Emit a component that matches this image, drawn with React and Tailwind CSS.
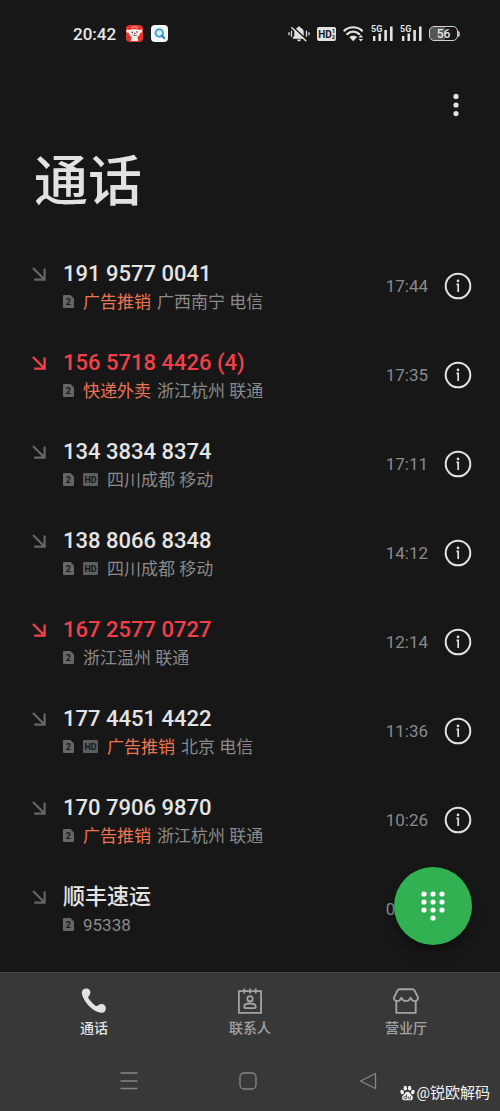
import React from "react";

const calls = [
  { name: "191 9577 0041", tag: "广告推销", place: "广西南宁 电信", time: "17:44" },
  { name: "156 5718 4426 (4)", tag: "快递外卖", place: "浙江杭州 联通", time: "17:35", missed: true },
  { name: "134 3834 8374", hd: true, place: "四川成都 移动", time: "17:11" },
  { name: "138 8066 8348", hd: true, place: "四川成都 移动", time: "14:12" },
  { name: "167 2577 0727", place: "浙江温州 联通", time: "12:14", missed: true },
  { name: "177 4451 4422", hd: true, tag: "广告推销", place: "北京 电信", time: "11:36" },
  { name: "170 7906 9870", tag: "广告推销", place: "浙江杭州 联通", time: "10:26" },
  { name: "顺丰速运", place: "95338", time: "09:58" },
];

function CourierAppIcon() {
  return (
    <svg width="17" height="17" viewBox="0 0 17 17" aria-hidden="true">
      <rect width="17" height="17" rx="4" fill="#e2352f" />
      <path d="M.3 6c0-1.500 1.600-2 2.600-1C5 4 12 4 13.400 5c1-1 3-.5 3 1 0 1.200-1 2-2.100 1.800C14 10 12.500 11.300 11.500 11.600L12 16H5l.6-4.400C4 11 3 9.600 2.800 7.800 1.300 8 .3 7.200.3 6z" fill="#f7f1ef" />
      <circle cx="6.300" cy="7.200" r=".8" fill="#333" />
      <circle cx="11" cy="7" r=".8" fill="#333" />
      <circle cx="8.700" cy="8.300" r=".9" fill="#d63a35" />
      <path d="M6.500 9.800c1.400 1 3 1 4.400 0" stroke="#444" strokeWidth=".8" fill="none" />
      <path d="M5 3c2-1.400 5.500-1.400 7.300 0" stroke="#f5b9ae" strokeWidth=".9" fill="none" />
    </svg>
  );
}

function SearchAppIcon() {
  return (
    <svg width="17" height="17" viewBox="0 0 17 17" aria-hidden="true">
      <rect width="17" height="17" rx="4" fill="#f1f8fc" />
      <circle cx="8.300" cy="8" r="3.700" stroke="#4a9fd0" strokeWidth="2" fill="#d8eef9" />
      <path d="M10.800 10.600l2.300 2.500" stroke="#3687b8" strokeWidth="2.200" strokeLinecap="round" />
    </svg>
  );
}

function MutedBellIcon() {
  return (
    <svg width="22" height="18" viewBox="0 0 22 18" fill="none" aria-hidden="true">
      <path d="M11 1.500c.8 0 1.200.5 1.200 1.100 2.200.6 3.500 2.300 3.500 4.600v3.500l1.600 2.300v.8H4.700V13l1.600-2.300V7.200c0-2.300 1.300-4 3.500-4.600 0-.6.400-1.100 1.200-1.100zM9 14.500h4c-.3 1.200-1 1.800-2 1.800s-1.700-.6-2-1.800z" fill="#e2e2e2" />
      <path d="M5 2l14 13" stroke="#171717" strokeWidth="1.600" />
      <path d="M3.800 2.800l14 13" stroke="#e2e2e2" strokeWidth="1.500" strokeLinecap="round" />
      <path d="M3.500 6.200v5M1 7.700v2M18.500 6.200v5M21 7.700v2" stroke="#e2e2e2" strokeWidth="1.300" strokeLinecap="round" />
    </svg>
  );
}

function HdVoiceIcon() {
  return (
    <svg width="19" height="14" viewBox="0 0 19 14" aria-hidden="true">
      <rect width="19" height="14" rx="2" fill="#e2e2e2" />
      <g fill="#171717" fontFamily="Roboto, sans-serif" fontWeight="700">
        <text x="1.300" y="10.600" fontSize="10">HD</text>
        <text x="14.800" y="6.300" fontSize="6">1</text>
        <text x="14.800" y="12.400" fontSize="6">2</text>
      </g>
    </svg>
  );
}

function WifiIcon() {
  return (
    <svg width="21" height="17" viewBox="0 0 21 17" fill="none" aria-hidden="true">
      <path d="M1.400 5.600c4.800-4.500 12.800-4.500 17.600 0M4.200 9.100c3.400-3.200 8.600-3.200 12 0" stroke="#e2e2e2" strokeWidth="2.200" strokeLinecap="round" />
      <path d="M6.300 12.100c2.200-1.900 5.600-1.900 7.800 0L10.200 16.200z" fill="#e2e2e2" />
      <path d="M17.800 9.800l2.300 2.600h-4.600zM17.800 16.500l2.300-2.600h-4.600z" fill="#e2e2e2" />
    </svg>
  );
}

function SignalIcon() {
  return (
    <svg width="22" height="17" viewBox="0 0 22 17" aria-hidden="true">
      <text x="0" y="7" fill="#e2e2e2" fontFamily="Roboto, sans-serif" fontWeight="700" fontSize="9">5G</text>
      <path d="M2 11h2.400v5H2zM7.500 8.500h2.500V16H7.500zM13.300 5h2.600V16h-2.600zM19 1.500h2.600V16H19z" fill="#e2e2e2" />
    </svg>
  );
}

function StatusBar() {
  return (
    <div className="flex h-[67px] items-center justify-between pl-[73px] pr-10">
      <div className="flex items-center gap-2">
        <span className="mr-0.5 text-[17px] leading-6 font-medium text-[#e8e8e8]">20:42</span>
        <CourierAppIcon />
        <SearchAppIcon />
      </div>
      <div className="flex items-center gap-[7px]">
        <MutedBellIcon />
        <HdVoiceIcon />
        <WifiIcon />
        <SignalIcon />
        <SignalIcon />
        <div className="flex items-center">
          <span className="flex h-[15px] w-[29px] items-center justify-center rounded-[5px] border border-[#d0d0d0] bg-gradient-to-r from-[#555] from-55% to-[#171717] to-55% text-xs leading-3 font-medium text-[#e8e8e8]">
            56
          </span>
          <span className="h-1.5 w-0.5 rounded-r-sm bg-[#b0b0b0]" />
        </div>
      </div>
    </div>
  );
}

function ArrowIcon({ missed }) {
  return (
    <svg width="14" height="14" viewBox="0 0 14 14" fill="none" stroke={missed ? "#f2404a" : "#666666"} strokeWidth={missed ? 2.400 : 2.200} aria-hidden="true">
      <path d="M1 1L12.500 12.500M12.600 1.500v11.100H2.200" />
    </svg>
  );
}

function SimIcon() {
  return (
    <svg width="11" height="13" viewBox="0 0 11 13" aria-hidden="true">
      <path d="M1 0h6.500L11 3.500V12a1 1 0 0 1-1 1H1a1 1 0 0 1-1-1V1a1 1 0 0 1 1-1z" fill="#666666" />
      <text x="5.300" y="10" textAnchor="middle" fill="#171717" fontFamily="Roboto, sans-serif" fontWeight="700" fontSize="9">2</text>
    </svg>
  );
}

function HdIcon() {
  return (
    <svg width="15" height="13" viewBox="0 0 15 13" aria-hidden="true">
      <rect width="15" height="13" rx="1" fill="#5e5e5e" />
      <text x="7.500" y="9.800" textAnchor="middle" fill="#171717" fontFamily="Roboto, sans-serif" fontWeight="700" fontSize="9">HD</text>
    </svg>
  );
}

function InfoIcon() {
  return (
    <svg width="28" height="28" viewBox="0 0 28 28" fill="none" aria-hidden="true">
      <circle cx="14" cy="14" r="12.300" stroke="#e2e2e2" strokeWidth="2" />
      <circle cx="14" cy="8.900" r="1.300" fill="#e2e2e2" />
      <path d="M12.500 12.400H14.200V20" stroke="#e2e2e2" strokeWidth="1.700" />
    </svg>
  );
}

function CallRow({ call }) {
  return (
    <li className="flex h-[89px] items-center pr-7 pl-8">
      <div className="flex min-w-0 flex-1 pt-1">
        <span className="flex h-7 w-[31px] shrink-0 items-center">
          <ArrowIcon missed={call.missed} />
        </span>
        <div className="min-w-0">
          <p className={`text-[22px] leading-7 font-medium whitespace-nowrap ${call.missed ? "text-[#f2404a]" : "text-[#e4e4e4]"}`}>
            {call.name}
          </p>
          <div className="flex h-7 items-center gap-[6px] text-[17px] leading-7 whitespace-nowrap text-[#8a8a8a]">
            <span className="flex items-center gap-[9px] pr-[3px]">
              <SimIcon />
              {call.hd && <HdIcon />}
            </span>
            {call.tag && <span className="text-[#ee7553]">{call.tag}</span>}
            <span>{call.place}</span>
          </div>
        </div>
      </div>
      <time className="mr-4 text-[17px] leading-7 text-[#8a8a8a]">{call.time}</time>
      <button type="button" aria-label={`${call.name} 详情`} className="shrink-0">
        <InfoIcon />
      </button>
    </li>
  );
}

function PhoneIcon() {
  return (
    <svg width="26" height="26" viewBox="0 0 26 26" aria-hidden="true">
      <path d="M2.200 1.500C3.900.1 7 .2 8.400 1.700c1.300 1.500 1.300 3.800.2 5.300L7.500 8.600c-.5.8-.3 1.500.3 2.200 1.600 2.300 4 4.800 6.400 6.700.8.600 1.500.7 2.300.2l1.500-1c1.700-1 4.300-.8 5.700.6 1.500 1.600 1.500 4.600.1 6.200-1.200 1.300-3.300 1.700-5.200 1.100C10.500 22 3.600 14.800 1.100 6.700.5 4.700.8 2.700 2.200 1.500z" fill="#e2e2e2" />
    </svg>
  );
}

function ContactsIcon() {
  return (
    <svg width="26" height="26" viewBox="0 0 26 26" fill="none" stroke="#a3a3a3" strokeWidth="1.800" aria-hidden="true">
      <path d="M1.900 3.200h22.200v21.700H1.900zM7.300.5v5M13 .5v5M18.700.5v5" />
      <circle cx="13" cy="10.800" r="2.700" />
      <path d="M7.200 18.700c0-2 2.300-3.200 5.800-3.200s5.800 1.200 5.800 3.200c0 1-1 1.500-2.200 1.500H9.400c-1.200 0-2.200-.5-2.200-1.500z" />
    </svg>
  );
}

function StoreIcon() {
  return (
    <svg width="26" height="26" viewBox="0 0 26 26" fill="none" stroke="#a3a3a3" strokeWidth="1.900" strokeLinejoin="round" aria-hidden="true">
      <path d="M6.500 1.200h13c1 0 1.600.5 2.100 1.400L25 9.500c.2 2.100-1.300 3.600-3.300 3.600-1.700 0-2.900-.9-3.500-2.600l-.5-.7-.7.700c-.6 1.700-2 2.600-4 2.600s-3.400-.9-4-2.600l-.7-.7-.5.7c-.6 1.700-1.800 2.600-3.500 2.600-2 0-3.500-1.500-3.300-3.600l3.400-6.900c.5-.9 1.100-1.400 2.100-1.400z" />
      <path d="M3.300 12.800v12.100h19.400V12.800" />
    </svg>
  );
}

const tabs = [
  { label: "通话", Icon: PhoneIcon, active: true },
  { label: "联系人", Icon: ContactsIcon },
  { label: "营业厅", Icon: StoreIcon },
];

function SystemIcon({ children }) {
  return (
    <svg width="20" height="20" viewBox="0 0 20 20" fill="none" stroke="#858585" strokeWidth="1.300" strokeLinejoin="round" aria-hidden="true">
      {children}
    </svg>
  );
}

function Watermark() {
  return (
    <div className="absolute right-[10px] bottom-2 flex items-center gap-0.5 text-[#f2f2f2]">
      <svg width="15" height="16" viewBox="0 0 15 16" aria-hidden="true">
        <g fill="currentColor">
          <ellipse cx="2.200" cy="7" rx="1.700" ry="2.300" transform="rotate(-15 2.200 7)" />
          <ellipse cx="5.300" cy="3.200" rx="1.700" ry="2.400" />
          <ellipse cx="9.600" cy="3.200" rx="1.700" ry="2.400" />
          <ellipse cx="12.800" cy="7" rx="1.700" ry="2.300" transform="rotate(15 12.800 7)" />
          <path d="M7.500 6.700c1.500 0 2.200 1.300 3.200 2.500 1.200 1.200 2.500 2.200 2.200 4-.3 1.700-1.900 2.300-3.200 2.100-1.500-.2-2.900-.2-4.400 0-1.300.2-2.900-.4-3.200-2.100-.3-1.800 1-2.800 2.200-4 1-1.200 1.700-2.500 3.200-2.500z" />
        </g>
        <path d="M6.600 9.500v4.300H5.100c-1.700 0-1.700-2.500 0-2.500h1.500M8.300 11.300v1.700c0 .6.300.9.900.9h1.200v-2.600" stroke="#383838" strokeWidth=".8" fill="none" />
      </svg>
      <span className="text-[15px] leading-5">@锐欧解码</span>
    </div>
  );
}

export default function App() {
  return (
    <div className="relative flex min-h-screen flex-col bg-[#171717] font-[Roboto,'Noto_Sans_CJK_SC',sans-serif] text-[#e2e2e2]" lang="zh-CN">
      <StatusBar />
      <header>
        <div className="flex justify-end pt-5 pr-8">
          <button type="button" aria-label="更多" className="flex h-9 w-6 items-center justify-center">
            <svg width="8" height="24" viewBox="0 0 8 24" fill="#e2e2e2" aria-hidden="true">
              <circle cx="4" cy="3.400" r="2.600" />
              <circle cx="4" cy="12" r="2.600" />
              <circle cx="4" cy="20.600" r="2.600" />
            </svg>
          </button>
        </div>
        <h1 className="pt-[27px] pl-[34px] text-[54px] leading-[66px] font-medium">通话</h1>
      </header>
      <main className="flex-1 pt-[25px] pb-4">
        <ul>
          {calls.map((call) => (
            <CallRow key={call.name} call={call} />
          ))}
        </ul>
      </main>
      <footer className="relative border-t border-[#484848] bg-[#383838]">
        <button
          type="button"
          aria-label="拨号盘"
          className="absolute right-7 bottom-full mb-7 flex size-[78px] items-center justify-center rounded-full bg-[#32b153] shadow-lg shadow-black/30"
        >
          <svg width="24" height="30" viewBox="0 0 24 30" fill="#ffffff" aria-hidden="true">
            {[3, 12, 21].map((x) => [3, 11, 19].map((y) => <circle key={`${x}-${y}`} cx={x} cy={y} r="2.600" />))}
            <circle cx="12" cy="27" r="2.600" />
          </svg>
        </button>
        <nav className="grid grid-cols-3 px-4 pt-[15px]">
          {tabs.map(({ label, Icon, active }) => (
            <a key={label} href="#" className={`flex flex-col items-center ${active ? "text-[#e2e2e2]" : "text-[#a3a3a3]"}`}>
              <Icon />
              <span className="text-sm leading-7 font-medium">{label}</span>
            </a>
          ))}
        </nav>
        <div className="grid h-[69px] grid-cols-3 items-center pt-2 pr-[72px] pl-[69px]">
          <button type="button" aria-label="最近任务" className="flex justify-center">
            <SystemIcon>
              <path d="M1.500 2h17M1.500 10h17M1.500 17.500h17" />
            </SystemIcon>
          </button>
          <button type="button" aria-label="主屏幕" className="flex justify-center">
            <SystemIcon>
              <rect x="2" y="2" width="16" height="16" rx="4" />
            </SystemIcon>
          </button>
          <button type="button" aria-label="返回" className="flex justify-center">
            <SystemIcon>
              <path d="M17.500 2.500v15L2.500 10z" />
            </SystemIcon>
          </button>
        </div>
        <Watermark />
      </footer>
    </div>
  );
}
